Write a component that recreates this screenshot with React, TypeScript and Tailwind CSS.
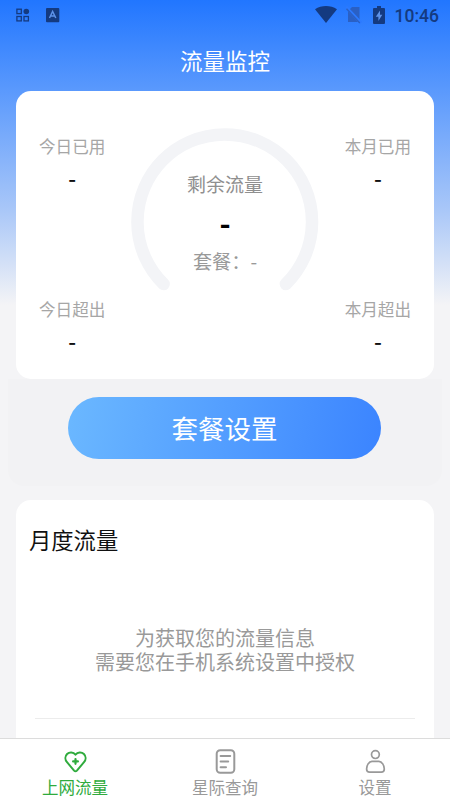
import clsx from "clsx";

const topStats = [
  { label: "今日已用", value: "-" },
  { label: "本月已用", value: "-" },
];

const bottomStats = [
  { label: "今日超出", value: "-" },
  { label: "本月超出", value: "-" },
];

const tabs = [
  { label: "上网流量", icon: HeartIcon, active: true },
  { label: "星际查询", icon: ListIcon, active: false },
  { label: "设置", icon: UserIcon, active: false },
];

function HeartIcon() {
  return (
    <svg width="24" height="24" viewBox="0 0 24 24" fill="none" stroke="currentColor" strokeWidth="2" strokeLinejoin="round" strokeLinecap="round">
      <path d="M12.5 4.6C10.3 1.9 6.4 1.7 4.1 4C1.8 6.3 1.9 9.8 4 12.2L11.1 20.6Q12.5 22 13.9 20.6L21 12.2C23.1 9.8 23.2 6.3 20.9 4C18.6 1.7 14.7 1.9 12.5 4.6Z" />
      <path d="M12.5 9V13.8M10.1 11.4H14.9" strokeWidth="2.2" />
    </svg>
  );
}

function ListIcon() {
  return (
    <svg width="24" height="26" viewBox="0 0 24 26" fill="none" stroke="currentColor" strokeWidth="2" strokeLinecap="round">
      <rect x="3.7" y="1.3" width="17.6" height="22.4" rx="3.5" />
      <path d="M7.6 7H17.2M7.6 12.5H15.2M7.6 18.2H13" />
    </svg>
  );
}

function UserIcon() {
  return (
    <svg width="24" height="26" viewBox="0 0 24 26" fill="none" stroke="currentColor" strokeWidth="1.7" strokeLinejoin="round">
      <circle cx="12.4" cy="5.6" r="3.9" />
      <path d="M9 12.3H15.8C19 12.6 21.3 16.3 21.3 20Q21.3 23.2 18.3 23.2H6.6Q3.6 23.2 3.6 20C3.6 16.3 5.8 12.6 9 12.3Z" />
    </svg>
  );
}

function StatusBar() {
  return (
    <div className="flex h-[30px] items-center justify-between pl-4 pr-[11px] text-[#143a80]">
      <div className="flex items-center gap-4">
        <svg width="14" height="14" viewBox="0 0 14 14" fill="none" stroke="currentColor" strokeWidth="1.3">
          <rect x="0.9" y="1.2" width="4.4" height="4.4" />
          <circle cx="10.3" cy="3.5" r="2.8" fill="currentColor" stroke="none" />
          <rect x="0.9" y="8.5" width="4.4" height="4.4" />
          <rect x="8" y="8.5" width="4.4" height="4.4" />
        </svg>
        <svg width="14" height="16" viewBox="0 0 14 16">
          <rect x="0" y="1" width="13.3" height="14.3" rx="1" fill="currentColor" />
          <path d="M3.5 11L6.6 4.5L9.8 11M4.8 9H8.5" fill="none" stroke="#5d92e8" strokeWidth="1.5" />
        </svg>
      </div>
      <div className="flex items-center">
        <svg className="mr-[9px]" width="22" height="18" viewBox="0 0 22 18">
          <path d="M0 3.2C6.5 -1 15.5 -1 22 3.2L11 17Z" fill="currentColor" />
        </svg>
        <svg className="mr-[11px]" width="16" height="18" viewBox="0 0 16 18">
          <path d="M6 1H13.5V16H2V5Z" fill="#2a60c4" />
          <path d="M0 1L15 17" stroke="#2c7aff" strokeWidth="3" />
          <path d="M0.5 2.8L13.8 17" stroke="#2a60c4" strokeWidth="1.3" />
        </svg>
        <svg className="mr-[10px]" width="12" height="20" viewBox="0 0 12 20">
          <path d="M4 1H8V3H11Q12 3 12 4V18Q12 19 11 19H1Q0 19 0 18V4Q0 3 1 3H4Z" fill="currentColor" />
          <path d="M7 5.5L2.8 11.8H5.4V16L9.3 9.8H7Z" fill="#5d92e8" />
        </svg>
        <span className="pt-px font-[Roboto] text-[17.5px] font-medium leading-[30px]">10:46</span>
      </div>
    </div>
  );
}

function StatRow({ items }: { items: { label: string; value: string }[] }) {
  return (
    <div className="flex justify-between">
      {items.map((item) => (
        <div key={item.label} className="flex flex-col items-center">
          <span className="text-[16.6px] leading-6 text-[#a6a6a6]">{item.label}</span>
          <span className="mt-[7px] text-[22px] font-medium leading-6 text-[#111]">{item.value}</span>
        </div>
      ))}
    </div>
  );
}

function Gauge() {
  return (
    <div className="absolute left-[115px] top-[37px] flex h-[188px] w-[188px] flex-col items-center">
      <svg className="absolute inset-0" width="188" height="188" viewBox="0 0 188 188">
        <path d="M32.6 156A87.3 87.3 0 1 1 154.9 156" fill="none" stroke="#f3f4f7" strokeWidth="12.5" strokeLinecap="round" />
      </svg>
      <div className="relative flex flex-col items-center">
        <span className="mt-[42px] text-[19px] leading-7 text-[#8f8f8f]">剩余流量</span>
        <span className="mt-2 text-[30px] font-bold leading-8 text-black">-</span>
        <span className="mt-[9px] text-[19.2px] leading-7 text-[#999]">套餐：-</span>
      </div>
    </div>
  );
}

export default function App() {
  return (
    <div className="flex h-[800px] w-[450px] flex-col overflow-hidden bg-[#f4f4f6] font-['Noto_Sans_CJK_SC','Noto_Sans',sans-serif]">
      <div className="flex min-h-0 flex-1 flex-col bg-[linear-gradient(180deg,#2176ff_0px,#5a99fd_90px,#a9c7f8_210px,#f4f4f6_305px)]">
        <StatusBar />

        <h1 className="h-[61px] text-center text-[22.5px] leading-[60px] text-white">流量监控</h1>

        {/* Usage summary */}
        <section className="relative mx-4 flex h-[288px] shrink-0 flex-col justify-between rounded-[15px] bg-white px-[23px] pb-[27px] pt-[43px]">
          <StatRow items={topStats} />
          <StatRow items={bottomStats} />
          <Gauge />
        </section>

        <div className="mx-2 mb-[14px] h-[107px] shrink-0 rounded-b-2xl bg-[#f2f2f4] pl-[60px] pt-[18px]">
          <button className="h-[62px] w-[313px] rounded-full bg-[linear-gradient(100deg,#6bb8ff,#3b84ff)] text-[26.5px] leading-[62px] text-white">
            套餐设置
          </button>
        </div>

        {/* Monthly usage */}
        <section className="mx-4 flex-1 rounded-t-[15px] bg-white">
          <h2 className="px-[13px] pt-[23px] text-[22.3px] leading-8 text-[#111]">月度流量</h2>
          <p className="mt-[71px] text-center text-[20px] leading-6 text-[#999]">
            为获取您的流量信息
            <br />
            需要您在手机系统设置中授权
          </p>
          <div className="mx-[19px] mt-11 border-t border-[#ececec]" />
        </section>
      </div>

      {/* Tab bar */}
      <nav className="grid h-[62px] shrink-0 grid-cols-3 border-t border-[#dcdcdc] bg-white">
        {tabs.map((tab) => {
          const Icon = tab.icon;
          return (
            <div
              key={tab.label}
              className={clsx("flex flex-col items-center", tab.active ? "text-[#2fab3d]" : "text-[#999]")}
            >
              <div className="mt-[9px] flex h-[27px] items-center">
                <Icon />
              </div>
              <span className="text-[16.5px] leading-6">{tab.label}</span>
            </div>
          );
        })}
      </nav>
    </div>
  );
}
